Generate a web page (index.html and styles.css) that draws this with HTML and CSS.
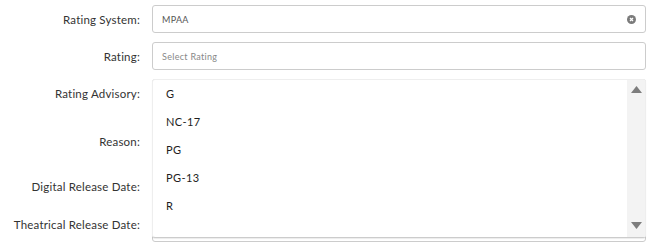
FILE: index.html
```html
<!DOCTYPE html>
<html>
<head>
<meta charset="utf-8">
<link rel="stylesheet" href="styles.css">
</head>
<body>
<div class="form">
  <div class="row r28">
    <label class="lbl">Rating System:</label>
    <div class="field">
      <span class="value">MPAA</span>
      <svg class="clear" width="9" height="9" viewBox="0 0 9 9"><circle cx="4.5" cy="4.5" r="4.5" fill="#7b7b7b"/><path d="M3 3L6 6M6 3L3 6" stroke="#fff" stroke-width="1.3"/></svg>
    </div>
  </div>
  <div class="row r28">
    <label class="lbl">Rating:</label>
    <div class="field"><span class="placeholder">Select Rating</span></div>
  </div>
  <div class="row r28">
    <label class="lbl">Rating Advisory:</label>
    <div class="field"></div>
  </div>
  <div class="row r50">
    <label class="lbl">Reason:</label>
    <div class="field"></div>
  </div>
  <div class="row r22">
    <label class="lbl">Digital Release Date:</label>
    <div class="field"></div>
  </div>
  <div class="row r36">
    <label class="lbl">Theatrical Release Date:</label>
    <div class="field"></div>
  </div>
</div>
<div class="dropdown">
  <ul class="options">
    <li>G</li>
    <li>NC-17</li>
    <li>PG</li>
    <li>PG-13</li>
    <li>R</li>
  </ul>
  <div class="scrollbar">
    <svg width="11" height="7" viewBox="0 0 11 7"><path d="M5.5 0L11 7H0Z" fill="#7d7d7d"/></svg>
    <svg width="11" height="7" viewBox="0 0 11 7"><path d="M0 0H11L5.5 7Z" fill="#7d7d7d"/></svg>
  </div>
</div>
</body>
</html>
```
FILE: styles.css
```css
* { box-sizing: border-box; }
html, body { margin: 0; padding: 0; background: #fff; }
body {
  font-family: "Lato", "Liberation Sans", sans-serif;
  color: #333;
  width: 653px;
  height: 243px;
  overflow: hidden;
  position: relative;
}
.form {
  padding: 5px 7px 0 0;
  display: flex;
  flex-direction: column;
  gap: 9px;
}
.row {
  display: grid;
  grid-template-columns: 140px 1fr;
  column-gap: 12px;
  align-items: center;
}
.r28 { height: 28px; }
.r50 { height: 50px; }
.r22 { height: 22px; }
.r36 { height: 36px; }
.lbl {
  text-align: right;
  font-size: 11.5px;
  color: #333;
  letter-spacing: 0.2px;
}
.field {
  height: 100%;
  border: 1px solid #ccc;
  border-radius: 3px;
  display: flex;
  align-items: center;
  padding: 0 9px;
  justify-content: space-between;
}
.value { font-size: 9px; color: #555; letter-spacing: 0.3px; }
.placeholder { font-size: 9px; color: #888; letter-spacing: 0.3px; }
.clear { display: block; }
.dropdown {
  position: absolute;
  left: 152px;
  top: 79px;
  width: 494px;
  height: 159px;
  background: #fff;
  border: 1px solid #eee;
  border-bottom-color: #ccc;
  border-radius: 3px;
  box-shadow: 0 1px 1px rgba(0,0,0,0.08);
  display: flex;
}
.options {
  list-style: none;
  margin: 0;
  padding: 0;
  flex: 1;
}
.options li {
  height: 28px;
  line-height: 27px;
  padding-left: 13px;
  font-size: 11px;
  font-weight: 400;
  color: #1e1e1e;
  letter-spacing: 0.4px;
}
.scrollbar {
  width: 18px;
  background: #f3f3f3;
  display: flex;
  flex-direction: column;
  justify-content: space-between;
  align-items: center;
  padding: 6px 0 8px;
}
.scrollbar svg { display: block; }
```
